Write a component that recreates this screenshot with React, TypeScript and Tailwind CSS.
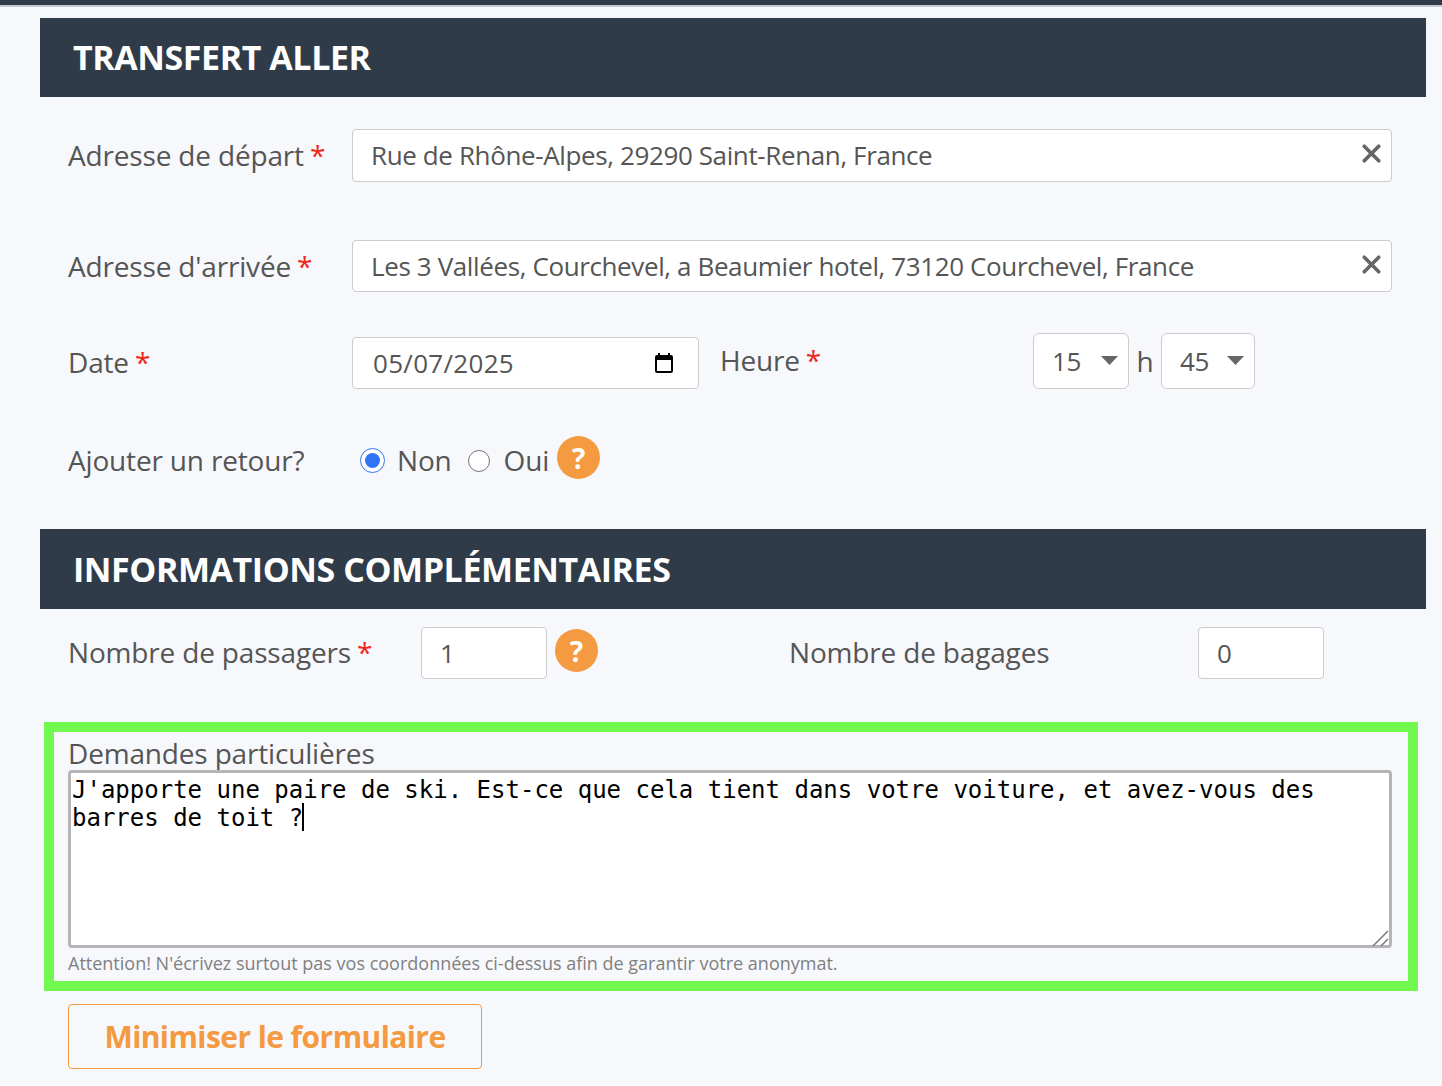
import { X } from "lucide-react";

const font = "font-['Open_Sans',sans-serif]";

function SectionTitle({ children, className }: { children: string; className?: string }) {
  return (
    <div className={`bg-[#2f3b48] pl-[33px] flex items-center ${className ?? ""}`}>
      <h2 className="text-[34px] leading-none font-bold text-white tracking-[-0.43px] uppercase">{children}</h2>
    </div>
  );
}

function Label({ text, required, className }: { text: string; required?: boolean; className?: string }) {
  return (
    <label className={`text-[28px] leading-[38px] tracking-[-0.17px] text-[#555] whitespace-nowrap ${className ?? ""}`}>
      {text}
      {required && <span className="text-[#f0261b] ml-[6px]">*</span>}
    </label>
  );
}

function ClearableInput({ value, className }: { value: string; className?: string }) {
  return (
    <div className="relative flex-1 h-full">
      <input
        readOnly
        value={value}
        className={`w-full h-full bg-white border border-[#ccc] rounded-[4px] pl-[18px] pr-[40px] text-[26px] tracking-[-0.38px] text-[#555] outline-none ${className ?? ""}`}
      />
      <X className="absolute right-[6px] top-[10px] w-[29px] h-[29px] text-[#666]" strokeWidth={3} />
    </div>
  );
}

function FakeSelect({ value, className }: { value: string; className?: string }) {
  return (
    <div className={`h-[56px] bg-white border border-[#ccc] rounded-[6px] flex items-center justify-between pl-[18px] pr-[10px] text-[26px] tracking-[-0.3px] text-[#555] ${className ?? ""}`}>
      <span>{value}</span>
      <svg width="17" height="9" viewBox="0 0 17 9" className="mb-[2px]">
        <path d="M0 0h17L8.5 9z" fill="#666" />
      </svg>
    </div>
  );
}

function Help() {
  return (
    <span className="w-[43px] h-[43px] rounded-full bg-[#f49a41] text-white font-bold text-[28px] flex items-center justify-center">
      ?
    </span>
  );
}

export default function App() {
  return (
    <div className={`min-h-[1086px] bg-[#f7f8fc] overflow-hidden ${font}`}>
      <div className="h-[7px] bg-[#2f3b48] border-b-2 border-[#c5cad0]" />
      <div className="ml-[40px] w-[1386px] pt-[11px]">
        <SectionTitle className="h-[79px] pb-[2px]">Transfert aller</SectionTitle>

        <div className="flex items-center h-[53px] mt-[32px] pl-[28px] pr-[34px]">
          <Label text="Adresse de départ" required className="w-[284px] -mt-[2px]" />
          <ClearableInput value="Rue de Rhône-Alpes, 29290 Saint-Renan, France" className="pb-[2px]" />
        </div>

        <div className="flex items-center h-[52px] mt-[58px] pl-[28px] pr-[34px]">
          <Label text="Adresse d'arrivée" required className="w-[284px]" />
          <ClearableInput value="Les 3 Vallées, Courchevel, a Beaumier hotel, 73120 Courchevel, France" />
        </div>

        <div className="flex items-start mt-[41px] pl-[28px]">
          <Label text="Date" required className="w-[284px] mt-[10px]" />
          <div className="w-[347px] h-[52px] mt-[4px] bg-white border border-[#ccc] rounded-[4px] flex items-center justify-between pl-[20px] pr-[22px] text-[26px] text-[#555]">
            <span className="tracking-[0.3px]">05/07/2025</span>
            <svg width="24" height="24" viewBox="0 0 24 24" fill="#000">
              <path d="M19 4h-1V2h-2v2H8V2H6v2H5a2 2 0 0 0-2 2v14a2 2 0 0 0 2 2h14a2 2 0 0 0 2-2V6a2 2 0 0 0-2-2zm0 16H5V9h14v11z" />
            </svg>
          </div>
          <Label text="Heure" required className="w-[313px] ml-[21px] mt-[8px]" />
          <FakeSelect value="15" className="w-[96px]" />
          <span className="w-[32px] text-center text-[28px] leading-[56px] text-[#555]">h</span>
          <FakeSelect value="45" className="w-[94px] pl-[17px]" />
        </div>

        <div className="flex items-center h-[44px] mt-[47px] pl-[28px] text-[28px] text-[#555]">
          <Label text="Ajouter un retour?" className="w-[292px] mt-[3px]" />
          <input type="radio" name="retour" defaultChecked className="w-[25px] h-[25px] mt-[5px] accent-[#2f74f5]" />
          <span className="ml-[12px] mt-[3px] tracking-[-0.17px]">Non</span>
          <input type="radio" name="retour" className="w-[22px] h-[22px] ml-[16px] mt-[5px]" />
          <span className="ml-[14px] mt-[3px] tracking-[-0.17px]">Oui</span>
          <span className="ml-[8px] -mt-[1px]"><Help /></span>
        </div>

        <SectionTitle className="h-[80px] mt-[49px]">Informations complémentaires</SectionTitle>

        <div className="flex items-center h-[52px] mt-[18px] pl-[28px]">
          <Label text="Nombre de passagers" required className="w-[353px] -mt-[2px]" />
          <input readOnly value="1" className="w-[126px] h-full bg-white border border-[#ccc] rounded-[4px] pl-[18px] text-[26px] text-[#555]" />
          <span className="ml-[8px] -mt-[5px]"><Help /></span>
          <Label text="Nombre de bagages" className="w-[409px] ml-[191px] -mt-[2px]" />
          <input readOnly value="0" className="w-[126px] h-full bg-white border border-[#ccc] rounded-[4px] pl-[18px] text-[26px] text-[#555]" />
        </div>

        <div className="ml-[4px] w-[1374px] h-[269px] mt-[43px] border-[10px] border-[#71f94f] pl-[14px] pr-[16px]">
          <label className="block text-[28px] leading-[38px] tracking-[-0.17px] text-[#555] h-[36px] mt-[2px]">Demandes particulières</label>
          <div className="relative">
            <textarea
              readOnly
              value={"J'apporte une paire de ski. Est-ce que cela tient dans votre voiture, et avez-vous des barres de toit ?"}
              className="block w-full h-[178px] bg-white border-[3px] border-[#b5b5b5] rounded-[4px] px-[1px] pt-[3px] font-['DejaVu_Sans_Mono',monospace] text-[24px] leading-[28px] text-black resize-none outline-none"
            />
            <span className="absolute left-[234px] top-[33px] w-[2px] h-[28px] bg-black" />
            <svg width="18" height="18" viewBox="0 0 18 18" className="absolute right-[2px] bottom-[1px]">
              <path d="M1 17 16 2M9 17l7-7" stroke="#777" strokeWidth="1.5" fill="none" />
            </svg>
          </div>
          <p className="text-[18px] leading-[30px] text-[#808080]">
            Attention! N'écrivez surtout pas vos coordonnées ci-dessus afin de garantir votre anonymat.
          </p>
        </div>

        <button className="block ml-[28px] mt-[13px] w-[414px] h-[65px] border border-[#f49a41] rounded-[4px] text-[30px] tracking-[-0.58px] font-bold text-[#f49a41]">
          Minimiser le formulaire
        </button>
      </div>
    </div>
  );
}
